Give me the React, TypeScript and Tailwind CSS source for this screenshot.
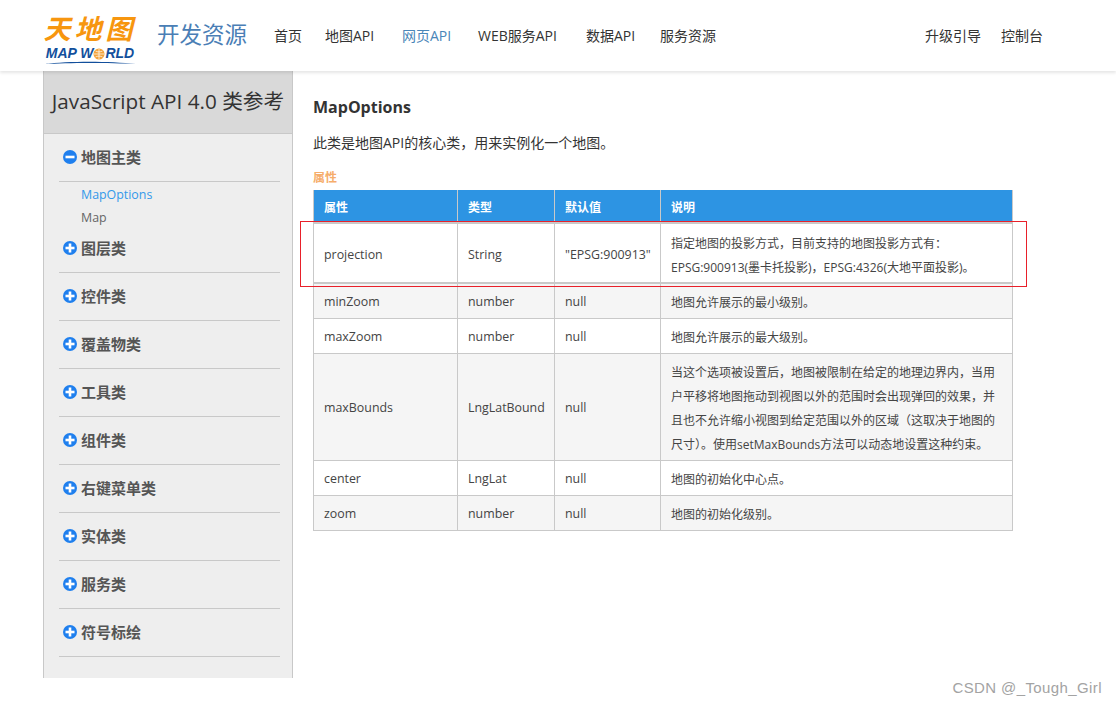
const font = { fontFamily: '"Open Sans", "Noto Sans CJK SC", sans-serif' }

const navItems = [
  { label: '首页', width: 'w-[51px]' },
  { label: '地图API', width: 'w-[77px]' },
  { label: '网页API', width: 'w-[76px]' },
  { label: 'WEB服务API', width: 'w-[108px]' },
  { label: '数据API', width: 'w-[74px]' },
  { label: '服务资源', width: 'w-[56px]' },
]
const groups = ['图层类', '控件类', '覆盖物类', '工具类', '组件类', '右键菜单类', '实体类', '服务类', '符号标绘']

const rows = [
  { name: 'minZoom', type: 'number', def: 'null', desc: ['地图允许展示的最小级别。'], h: 'h-[35px]', bg: 'bg-[#f5f5f5]' },
  { name: 'maxZoom', type: 'number', def: 'null', desc: ['地图允许展示的最大级别。'], h: 'h-[35px]', bg: 'bg-white' },
  {
    name: 'maxBounds',
    type: 'LngLatBound',
    def: 'null',
    desc: [
      '当这个选项被设置后，地图被限制在给定的地理边界内，当用',
      '户平移将地图拖动到视图以外的范围时会出现弹回的效果，并',
      '且也不允许缩小视图到给定范围以外的区域（这取决于地图的',
      '尺寸）。使用setMaxBounds方法可以动态地设置这种约束。',
    ],
    h: 'h-[107px]',
    bg: 'bg-[#f5f5f5]',
  },
  { name: 'center', type: 'LngLat', def: 'null', desc: ['地图的初始化中心点。'], h: 'h-[35px]', bg: 'bg-white' },
  { name: 'zoom', type: 'number', def: 'null', desc: ['地图的初始化级别。'], h: 'h-[35px]', bg: 'bg-[#f5f5f5]' },
]

const RoundIcon = ({ plus }: { plus?: boolean }) => (
  <svg width="14" height="14" viewBox="0 0 14 14" className="shrink-0">
    <circle cx="7" cy="7" r="7" fill="#1f7fee" />
    <rect x="2.5" y="5.7" width="9" height="2.6" fill="#fff" />
    {plus && <rect x="5.7" y="2.5" width="2.6" height="9" fill="#fff" />}
  </svg>
)

const Logo = () => (
  <div className="w-[92px] flex flex-col items-center">
    <div
      className="text-[#f7960f] text-[27px] leading-[32px] font-bold italic whitespace-nowrap tracking-[4px]"
      style={{ fontFamily: '"Noto Sans CJK SC", sans-serif' }}
    >
      天地图
    </div>
    <div
      className="mt-[2px] flex items-center text-[#124f9c] text-[14px] leading-[15px] font-bold italic whitespace-nowrap"
      style={{ fontFamily: '"Liberation Sans", sans-serif' }}
    >
      MAP W
      <svg width="12" height="12" viewBox="0 0 12 12">
        <circle cx="6" cy="6" r="5.5" fill="#f3a33a" />
        <path d="M1 6h10M6 1v10M2.5 3c2 1.2 5 1.2 7 0M2.5 9c2-1.2 5-1.2 7 0" stroke="#fff" strokeWidth="0.7" fill="none" />
      </svg>
      RLD
    </div>
    <svg width="92" height="3" viewBox="0 0 92 3" className="block">
      <path d="M0 3C25 0 65 0 92 3C65 1.5 25 1.5 0 3Z" fill="#124f9c" />
    </svg>
  </div>
)

const Cell = ({ children, pad = 'pt-[3px]', className = '' }: { children: React.ReactNode; pad?: string; className?: string }) => (
  <div className={`flex flex-col justify-center px-[10px] border-r border-[#c9c9c9] ${pad} ${className}`}>{children}</div>
)

const cols = 'grid grid-cols-[144px_97px_106px_352px]'

const App = () => {
  return (
    <div className="relative w-[1116px] h-[707px] bg-white overflow-hidden text-[#333]" style={font}>
      <header className="h-[71px] pl-[44px] pr-[73px] flex items-center bg-white shadow-[0_2px_3px_rgba(0,0,0,0.1)] relative z-10">
        <div className="mt-[5px]">
          <Logo />
        </div>
        <div className="ml-[21px] mb-[1px] text-[22.5px] text-[#4a7eb5] whitespace-nowrap">开发资源</div>
        <nav className="ml-[27px] mb-[1px] flex text-[14px] whitespace-nowrap">
          {navItems.map((item) => (
            <span key={item.label} className={`${item.width} ${item.label === '网页API' ? 'text-[#4a86b8]' : 'text-[#333]'}`}>
              {item.label}
            </span>
          ))}
        </nav>
        <div className="ml-auto mb-[1px] flex gap-[20px] text-[14px] whitespace-nowrap">
          <span>升级引导</span>
          <span>控制台</span>
        </div>
      </header>

      <div className="flex pl-[43px] items-start">
        <aside className="w-[250px] h-[607px] bg-[#eeeeee] border-x border-[#c8c8c8] shrink-0">
          <div className="h-[63px] bg-[#d9d9d9] border-b border-[#c8c8c8] flex items-center justify-center text-[20.7px] text-[#333] whitespace-nowrap">
            JavaScript API 4.0 类参考
          </div>
          <div className="mx-[15px] w-[221px]">
            <div className="h-[48px] pb-[1px] border-b border-[#c8c8c8] flex items-center gap-[4px] pl-[4px] font-bold text-[15px] text-[#555]">
              <RoundIcon />
              地图主类
            </div>
            <div className="h-[43px] pl-[22px] pt-[1px] text-[12.4px] leading-[23px] text-[#666]">
              <div className="text-[#3399ea]">MapOptions</div>
              <div>Map</div>
            </div>
            {groups.map((g) => (
              <div key={g} className="h-[48px] pb-[1px] border-b border-[#c8c8c8] flex items-center gap-[4px] pl-[4px] font-bold text-[15px] text-[#555]">
                <RoundIcon plus />
                {g}
              </div>
            ))}
          </div>
        </aside>

        <main className="pl-[20px] w-[720px]">
          <h1 className="mt-[25px] text-[16px] leading-[22px] font-bold text-[#333]">MapOptions</h1>
          <p className="mt-[15px] text-[14px] leading-[20px] text-[#333]">此类是地图API的核心类，用来实例化一个地图。</p>
          <div className="mt-[16px] text-[12px] leading-[18px] font-bold text-[#f6ad6b]">属性</div>
          <div className="mt-[3px] w-[700px] border-l border-[#c9c9c9] text-[12.4px] text-[#444]">
            <div className={`${cols} h-[34px] bg-[#2d94e3] border-b-[3px] border-[#c9c9c9] text-white font-bold text-[12px]`}>
              <Cell pad="pt-[5px]">属性</Cell>
              <Cell pad="pt-[5px]">类型</Cell>
              <Cell pad="pt-[5px]">默认值</Cell>
              <Cell pad="pt-[5px]">说明</Cell>
            </div>
            <div className={`${cols} h-[60px] bg-white border-b-2 border-[#c9c9c9]`}>
              <Cell pad="pt-[5px]">projection</Cell>
              <Cell pad="pt-[5px]">String</Cell>
              <Cell pad="pt-[5px]" className="whitespace-nowrap">"EPSG:900913"</Cell>
              <Cell pad="pt-[5px]" className="text-[12px] leading-[24px] whitespace-nowrap">
                <div>指定地图的投影方式，目前支持的地图投影方式有：</div>
                <div>EPSG:900913(墨卡托投影)，EPSG:4326(大地平面投影)。</div>
              </Cell>
            </div>
            {rows.map((r) => (
              <div key={r.name} className={`${cols} ${r.h} ${r.bg} border-b border-[#c9c9c9]`}>
                <Cell>{r.name}</Cell>
                <Cell>{r.type}</Cell>
                <Cell>{r.def}</Cell>
                <Cell className="text-[12px] leading-[24px] whitespace-nowrap">
                  {r.desc.map((line) => (
                    <div key={line}>{line}</div>
                  ))}
                </Cell>
              </div>
            ))}
          </div>
        </main>
      </div>

      {/* red annotation box from the screenshot */}
      <div className="absolute left-[300px] top-[221px] w-[727px] h-[66px] border border-[#e8202a] pointer-events-none" />
      {/* watermark */}
      <div
        className="absolute right-[14px] top-[678px] text-[15px] leading-[20px] text-[#a3a3a3] whitespace-nowrap tracking-[0.4px]"
        style={{ fontFamily: '"Liberation Sans", sans-serif' }}
      >
        CSDN @_Tough_Girl
      </div>
    </div>
  )
}

export default App
